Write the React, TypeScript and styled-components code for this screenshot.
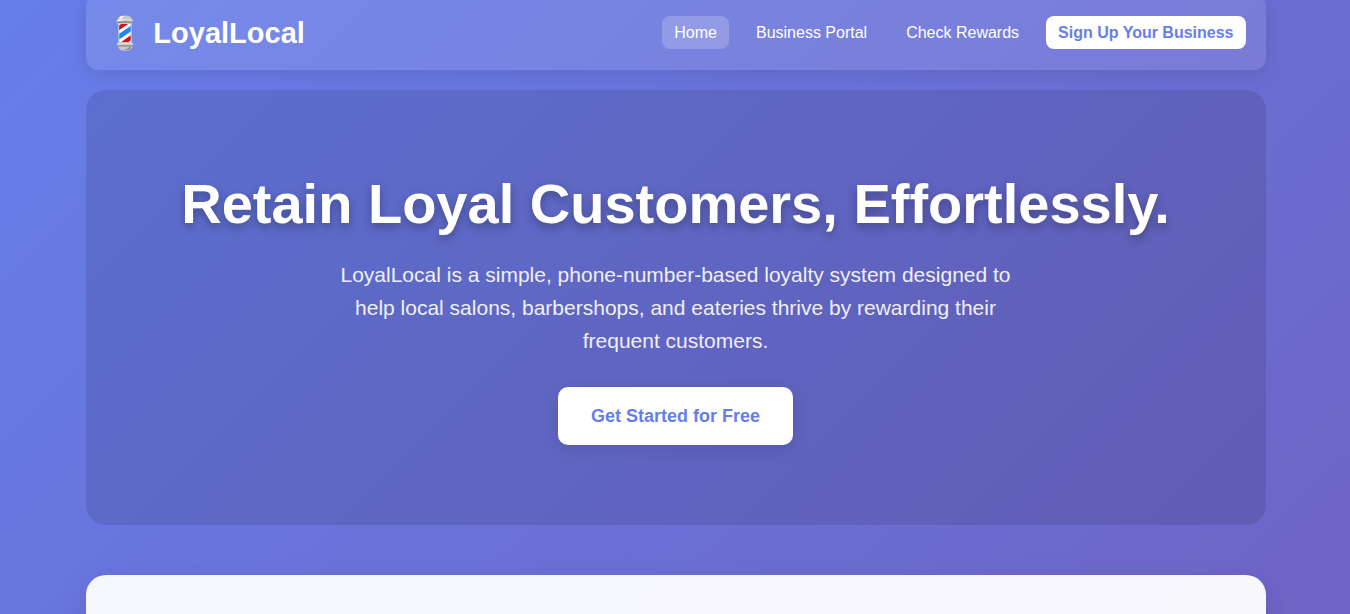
import React from "react";
import styled, { createGlobalStyle } from "styled-components";

const GlobalStyle = createGlobalStyle`
  * {
    box-sizing: border-box;
    margin: 0;
    padding: 0;
  }
  body {
    font-family: "Liberation Sans", Arial, sans-serif;
    color: #fff;
  }
`;

const Page = styled.div`
  height: 100vh;
  overflow: hidden;
  padding-left: 1px;
  background: linear-gradient(135deg, #667eea 0%, #764ba2 100%) 0 0 / 100% 2600px no-repeat;
`;

const Container = styled.div`
  display: flow-root;
  max-width: 1180px;
  margin: 0 auto;
`;

const Header = styled.header`
  display: flex;
  justify-content: space-between;
  align-items: center;
  height: 75px;
  margin-top: -5px;
  margin-bottom: 20px;
  padding: 0 20px;
  background: rgba(255, 255, 255, 0.1);
  border-radius: 12px;
  box-shadow: 0 4px 20px rgba(0, 0, 0, 0.1);
`;

const Brand = styled.a`
  display: flex;
  align-items: center;
  gap: 8px;
  color: #fff;
  font-size: 29px;
  line-height: 36px;
  font-weight: 700;
  text-decoration: none;
`;

const BrandMark = styled.span`
  font-family: "Noto Color Emoji", sans-serif;
  font-size: 32px;
  font-weight: 400;
  line-height: 36px;
`;

const Nav = styled.nav`
  display: flex;
  gap: 15px;
`;

const NavLink = styled.a<{ $variant?: "active" | "solid" }>`
  padding: 8px 12px;
  border-radius: 8px;
  font-size: 16px;
  line-height: 17px;
  text-decoration: none;
  font-weight: ${(p) => (p.$variant === "solid" ? 700 : 400)};
  color: ${(p) => (p.$variant === "solid" ? "#667eea" : "#fff")};
  background: ${(p) =>
    p.$variant === "solid"
      ? "#fff"
      : p.$variant === "active"
        ? "rgba(255, 255, 255, 0.2)"
        : "transparent"};
`;

const Hero = styled.section`
  display: flex;
  flex-direction: column;
  align-items: center;
  padding: 80px 20px;
  margin-bottom: 50px;
  text-align: center;
  background: rgba(0, 0, 0, 0.1);
  border-radius: 20px;
`;

const Title = styled.h1`
  margin-bottom: 20px;
  font-size: 56px;
  line-height: 68px;
  font-weight: 700;
  text-shadow: 0 4px 10px rgba(0, 0, 0, 0.3);
`;

const Lead = styled.p`
  max-width: 700px;
  margin-bottom: 30px;
  font-size: 21px;
  line-height: 33px;
  opacity: 0.9;
`;

const CallToAction = styled.button`
  padding: 19px 33px;
  border: 0;
  border-radius: 10px;
  background: #fff;
  color: #667eea;
  font-family: inherit;
  font-size: 18px;
  line-height: 20px;
  font-weight: 700;
  box-shadow: 0 4px 15px rgba(0, 0, 0, 0.1);
  cursor: pointer;
`;

const Card = styled.section`
  min-height: 400px;
  background: rgba(255, 255, 255, 0.95);
  border-radius: 20px;
  box-shadow: 0 10px 30px rgba(0, 0, 0, 0.1);
`;

export default function App() {
  return (
    <>
      <GlobalStyle />
      <Page>
        <Container>
          <Header>
            <Brand href="#">
              <BrandMark aria-hidden="true">💈</BrandMark>
              LoyalLocal
            </Brand>
            <Nav>
              <NavLink href="#" $variant="active">Home</NavLink>
              <NavLink href="#portal">Business Portal</NavLink>
              <NavLink href="#rewards">Check Rewards</NavLink>
              <NavLink href="#signup" $variant="solid">Sign Up Your Business</NavLink>
            </Nav>
          </Header>
          <Hero>
            <Title>Retain Loyal Customers, Effortlessly.</Title>
            <Lead>
              LoyalLocal is a simple, phone-number-based loyalty system designed to
              help local salons, barbershops, and eateries thrive by rewarding their
              frequent customers.
            </Lead>
            <CallToAction type="button">Get Started for Free</CallToAction>
          </Hero>
          <Card />
        </Container>
      </Page>
    </>
  );
}
